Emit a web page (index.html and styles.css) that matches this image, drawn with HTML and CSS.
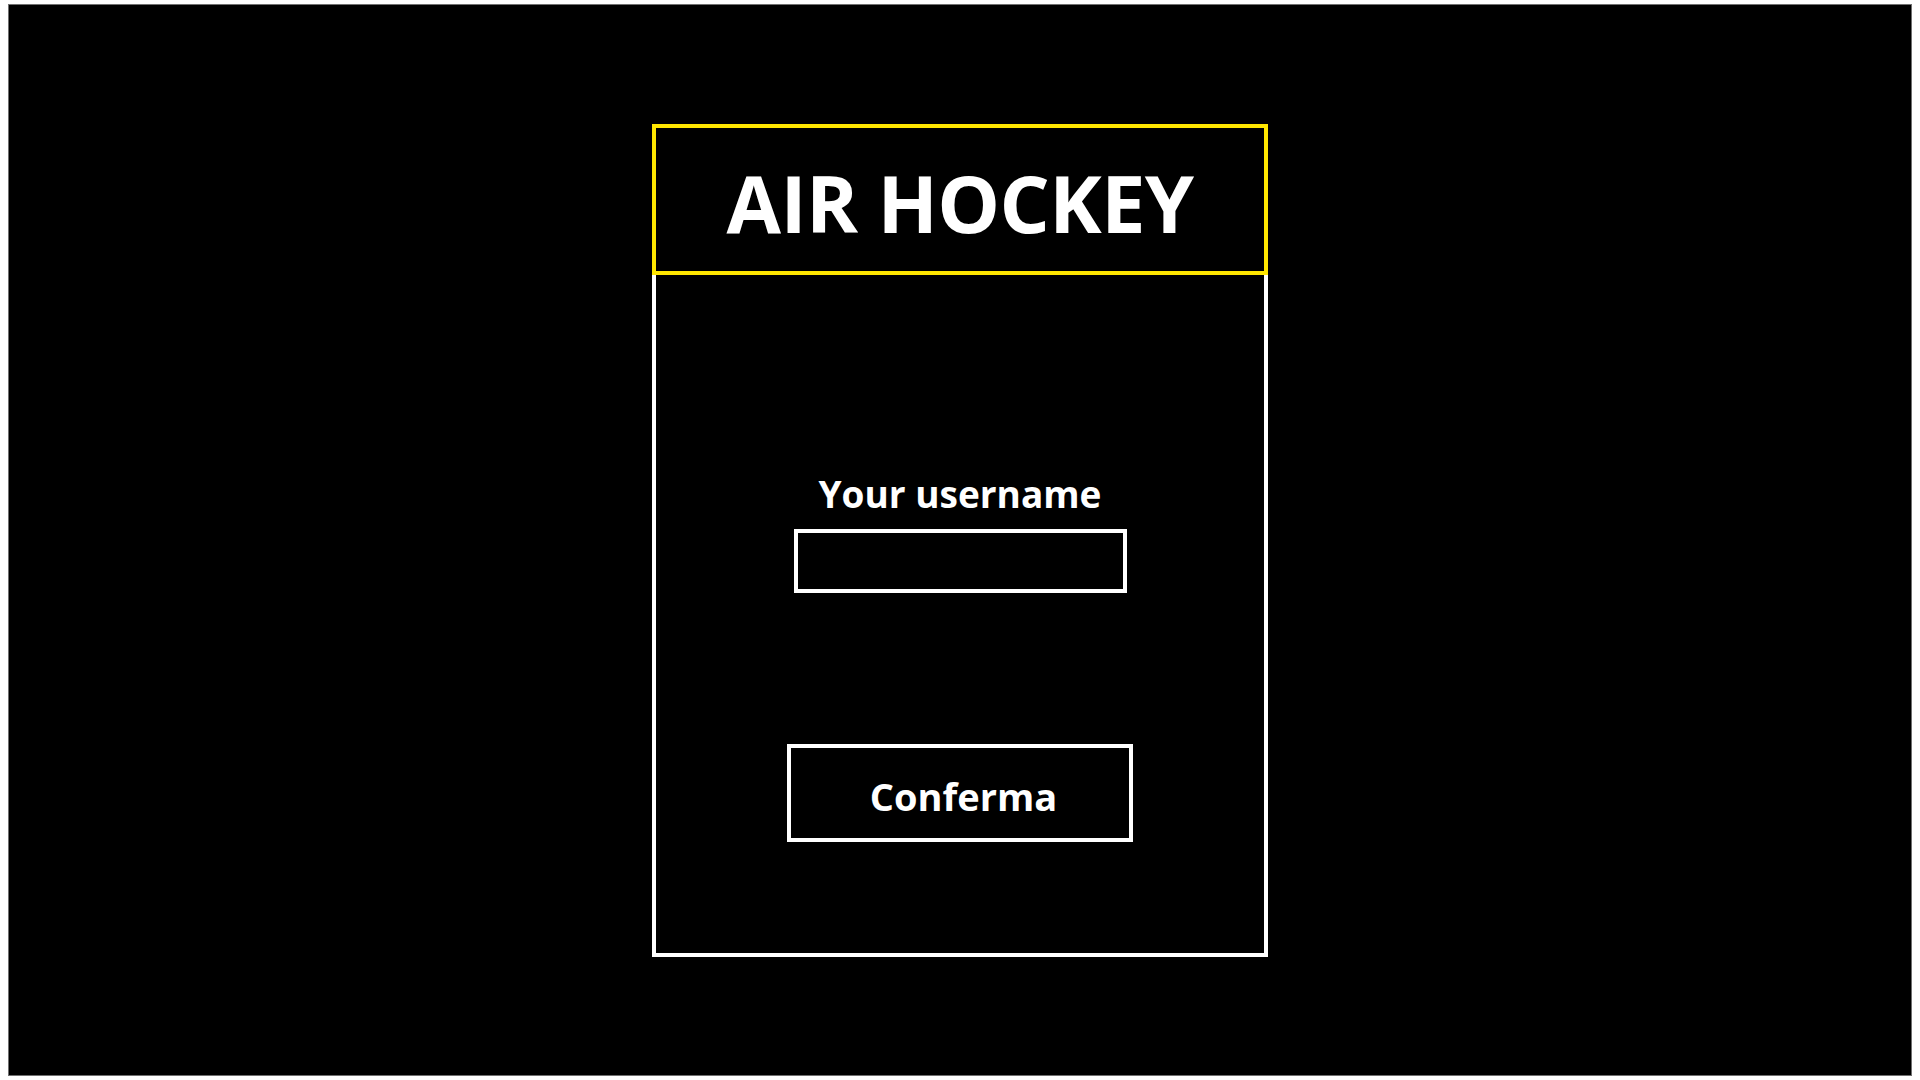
FILE: index.html
```html
<!DOCTYPE html>
<html lang="it">
<head>
<meta charset="utf-8">
<title>Air Hockey</title>
<link rel="stylesheet" href="styles.css">
</head>
<body>
<div class="screen">
  <div class="card">
    <div class="header">
      <h1 class="title">AIR HOCKEY</h1>
    </div>
    <div class="body">
      <label class="label" for="username">Your username</label>
      <input class="input" id="username" type="text">
      <button class="button" type="button">Conferma</button>
    </div>
  </div>
</div>
</body>
</html>
```
FILE: styles.css
```css
html, body {
  margin: 0;
  padding: 0;
  background: #ffffff;
}

body {
  font-family: "Open Sans", "Noto Sans", sans-serif;
}

.screen {
  box-sizing: border-box;
  margin: 4px 8px;
  height: 1072px;
  background: #000000;
  border: 1px solid #707070;
  display: flex;
  align-items: center;
  justify-content: center;
}

.card {
  width: 616px;
  height: 833px;
  display: flex;
  flex-direction: column;
  margin-top: 1px;
}

.header {
  box-sizing: border-box;
  height: 151px;
  border: 4px solid #ffe600;
  display: flex;
  align-items: center;
  justify-content: center;
  padding-top: 6px;
}

.title {
  margin: 0;
  color: #ffffff;
  font-size: 79px;
  font-weight: 700;
  line-height: 1.36;
  letter-spacing: -0.6px;
}

.body {
  box-sizing: border-box;
  flex: 1;
  border: 4px solid #ffffff;
  border-top: 0;
  display: flex;
  flex-direction: column;
  align-items: center;
  padding-top: 195px;
}

.label {
  color: #ffffff;
  font-size: 37px;
  font-weight: 700;
  line-height: 48px;
  letter-spacing: 0;
}

.input {
  box-sizing: border-box;
  width: 333px;
  height: 64px;
  margin-top: 11px;
  background: #000000;
  border: 4px solid #ffffff;
  border-radius: 0;
  outline: none;
  color: #ffffff;
  font-family: inherit;
  font-size: 28px;
  padding: 0 10px;
}

.button {
  box-sizing: border-box;
  width: 346px;
  height: 98px;
  margin-top: 151px;
  background: #000000;
  border: 4px solid #ffffff;
  border-radius: 0;
  color: #ffffff;
  font-family: inherit;
  font-size: 38px;
  font-weight: 700;
  padding: 5px 0 0 7px;
  cursor: pointer;
}
```
